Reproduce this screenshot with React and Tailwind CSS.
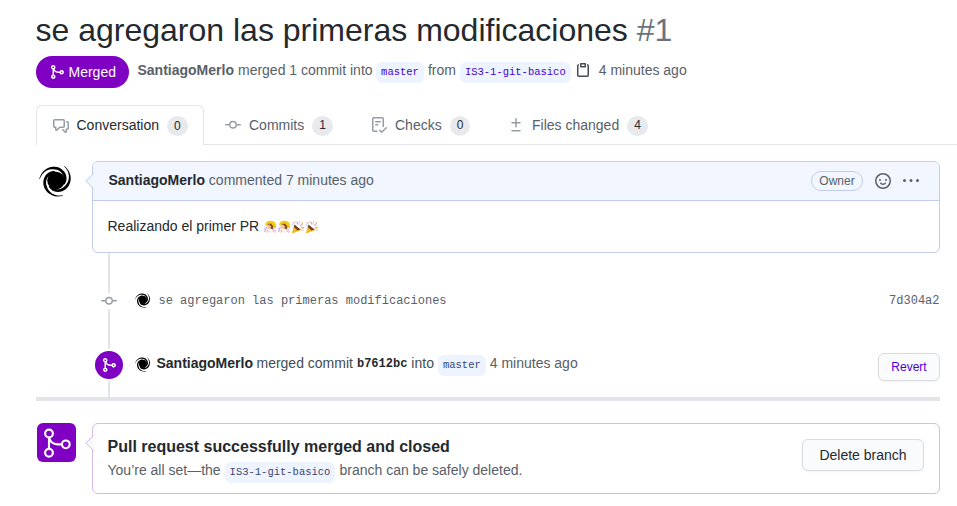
import React from "react";

const PATHS = {
  merge:
    "M5 3.254V3.25v.005a.75.75 0 110-.005v.004zm.45 1.9a2.25 2.25 0 10-1.95.218v5.256a2.25 2.25 0 101.5 0V7.123A5.735 5.735 0 009.25 9h1.378a2.251 2.251 0 100-1.5H9.25a4.25 4.25 0 01-3.8-2.346zM12.75 9a.75.75 0 100-1.5.75.75 0 000 1.5zm-8.5 4.5a.75.75 0 100-1.5.75.75 0 000 1.5z",
  discussion:
    "M1.5 2.75a.25.25 0 01.25-.25h8.5a.25.25 0 01.25.25v5.5a.25.25 0 01-.25.25h-3.5a.75.75 0 00-.53.22L3.5 11.44V9.25a.75.75 0 00-.75-.75h-1a.25.25 0 01-.25-.25v-5.5zM1.75 1A1.75 1.75 0 000 2.75v5.5C0 9.216.784 10 1.75 10H2v1.543a1.457 1.457 0 002.487 1.03L7.061 10h3.189A1.75 1.75 0 0012 8.25v-5.5A1.75 1.75 0 0010.25 1h-8.5zM14.5 4.75a.25.25 0 00-.25-.25h-.5a.75.75 0 110-1.5h.5c.966 0 1.75.784 1.75 1.75v5.5A1.75 1.75 0 0114.25 12H14v1.543a1.457 1.457 0 01-2.487 1.03L9.22 12.28a.75.75 0 111.06-1.06l2.22 2.22v-2.19a.75.75 0 01.75-.75h1a.25.25 0 00.25-.25v-5.5z",
  commit:
    "M10.5 7.75a2.5 2.5 0 11-5 0 2.5 2.5 0 015 0zm1.43.75a4.002 4.002 0 01-7.86 0H.75a.75.75 0 110-1.5h3.32a4.001 4.001 0 017.86 0h3.32a.75.75 0 110 1.5h-3.32z",
  checklist:
    "M2.5 1.75a.25.25 0 01.25-.25h8.5a.25.25 0 01.25.25v7.736a.75.75 0 101.5 0V1.75A1.75 1.75 0 0011.25 0h-8.5A1.75 1.75 0 001 1.75v11.5c0 .966.784 1.75 1.75 1.75h3.17a.75.75 0 000-1.5H2.75a.25.25 0 01-.25-.25V1.75zM4.75 4a.75.75 0 000 1.5h4.5a.75.75 0 000-1.5h-4.5zM4 7.75A.75.75 0 014.75 7h2a.75.75 0 010 1.5h-2A.75.75 0 014 7.75zm11.774 3.537a.75.75 0 00-1.048-1.074L10.7 14.145 9.281 12.72a.75.75 0 00-1.062 1.058l1.943 1.95a.75.75 0 001.055.008l4.557-4.45z",
  diff:
    "M8.75 1.75a.75.75 0 00-1.5 0V5H4a.75.75 0 000 1.5h3.25v3.25a.75.75 0 001.5 0V6.5H12A.75.75 0 0012 5H8.75V1.75zM4 13a.75.75 0 000 1.5h8a.75.75 0 100-1.5H4z",
  clipboard:
    "M5.75 1a.75.75 0 00-.75.75v3c0 .414.336.75.75.75h4.5a.75.75 0 00.75-.75v-3a.75.75 0 00-.75-.75h-4.5zm.75 3V2.5h3V4h-3zm-2.874-.467a.75.75 0 00-.752-1.298A1.75 1.75 0 002 3.75v9.5c0 .966.784 1.75 1.75 1.75h8.5A1.75 1.75 0 0014 13.25v-9.5a1.75 1.75 0 00-.874-1.515.75.75 0 10-.752 1.298.25.25 0 01.126.217v9.5a.25.25 0 01-.25.25h-8.5a.25.25 0 01-.25-.25v-9.5a.25.25 0 01.126-.217z",
  smiley:
    "M1.5 8a6.5 6.5 0 1113 0 6.5 6.5 0 01-13 0zM8 0a8 8 0 100 16A8 8 0 008 0zM5 8a1 1 0 100-2 1 1 0 000 2zm7-1a1 1 0 11-2 0 1 1 0 012 0zM5.32 9.636a.75.75 0 011.038.175l.007.009c.103.118.22.222.35.31.264.178.683.37 1.285.37.602 0 1.02-.192 1.285-.371.13-.088.247-.192.35-.31l.007-.008a.75.75 0 111.222.87l-.614-.431c.614.43.614.431.613.431v.001l-.001.002-.002.003-.005.007-.014.019a1.984 1.984 0 01-.184.213c-.16.166-.338.316-.53.445-.63.418-1.37.638-2.127.629-.946 0-1.652-.308-2.126-.63a3.331 3.331 0 01-.715-.657l-.014-.02-.005-.006-.002-.003v-.002h-.001l.613-.432-.614.43a.75.75 0 01.183-1.044h.001z",
  kebab:
    "M8 9a1.5 1.5 0 100-3 1.5 1.5 0 000 3zM1.5 9a1.5 1.5 0 100-3 1.5 1.5 0 000 3zm13 0a1.5 1.5 0 100-3 1.5 1.5 0 000 3z",
};

function Icon({ name, className = "size-4" }) {
  return (
    <svg viewBox="0 0 16 16" fill="currentColor" className={`block shrink-0 ${className}`}>
      <path fillRule="evenodd" d={PATHS[name]} />
    </svg>
  );
}

// One arm of the spiral: starts as a point far out and thickens as it winds clockwise into the core.
function armPath(startDeg) {
  const outer = [];
  const inner = [];
  for (let i = 0; i <= 20; i++) {
    const t = i / 20;
    const angle = ((startDeg + 200 * t) * Math.PI) / 180;
    const r = 16.8 - 7.4 * t;
    const width = 0.5 + 2.3 * Math.min(1, t * 2.5);
    outer.push(`${(r * Math.cos(angle)).toFixed(2)} ${(r * Math.sin(angle)).toFixed(2)}`);
    inner.unshift(`${((r - width) * Math.cos(angle)).toFixed(2)} ${((r - width) * Math.sin(angle)).toFixed(2)}`);
  }
  return `M${[...outer, ...inner].join("L")}Z`;
}

const ARMS = [185, 300, 65].map(armPath);

function Avatar({ className, viewBox = "-20 -19.5 40 40" }) {
  return (
    <svg viewBox={viewBox} className={`block shrink-0 ${className}`}>
      <circle r="8.800" />
      {ARMS.map((d) => (
        <path key={d} d={d} />
      ))}
    </svg>
  );
}

function Bride() {
  return (
    <svg viewBox="0 0 14 14" className="block size-3.5">
      <path d="M3 5C1.500 7 1 10 .5 13l2-1 1 1 1.500-4 4 0 2 4 2-1C12.500 9 12 6 10 4Z" fill="#f3eef8" />
      <path d="M2 5C2.500 1.500 5 .5 8 .8C12 1 13.800 4 13 8.500L10.500 7 8 4.500 4.500 6Z" fill="#f1cb16" />
      <path d="M5 4L8 3.500l2.500 3L10 9H8L5 6Z" fill="#86502d" />
      <path d="M4 5.500l2-1 2 2-.5 2-2 .5L4 7Z" fill="#f5c792" />
      <path d="M3.500 7L1.500 12M5 9.500L4 12.500M9 9l2.500 3.500" stroke="#eb8f86" strokeWidth=".8" />
      <path d="M2 7.500l-1 2M10.500 8l2.500 4M6.500 10.500l1 2" stroke="#bac7f2" strokeWidth=".8" />
    </svg>
  );
}

function Popper() {
  return (
    <svg viewBox="0 0 14 14" className="block size-3.5">
      <path d="M3 5.500L10.500 10 .8 13.500Z" fill="#f5b820" />
      <path d="M3.500 4.500L9.500 9.500 6.500 10.500 2.800 7Z" fill="#70402a" />
      <path d="M1.500 2l2 2M6 1.500l.5 3M12 3L9 5.500M9.500 8l3.500-.5" stroke="#f0958d" />
      <path d="M4 1l1 2M9 1L7.500 4.500M12.500 5l-3 1M1 4l1 2M10.500 10l2 .5" stroke="#c5c9f7" />
      <path d="M10.500 1.500l1 1M11 8.500l1.500.5" stroke="#f5bd65" />
    </svg>
  );
}

function Branch({ children, tone = "text-[#4400cc]" }) {
  return (
    <span className={`inline-flex h-[21px] items-center rounded-md bg-[#eef4ff] px-[5px] font-['Liberation_Mono',monospace] text-[10.5px] ${tone}`}>
      {children}
    </span>
  );
}

function Tab({ icon, label, count, className, gap = "mr-2" }) {
  return (
    <div className={`flex items-center ${className}`}>
      <Icon name={icon} className={`size-4 text-[#959da5] ${gap}`} />
      <span>{label}</span>
      <span className="ml-2 mt-px flex h-5 w-[20.7px] items-center justify-center rounded-full bg-[#e8e9ec] text-[12px] text-[#24292e]">
        {count}
      </span>
    </div>
  );
}

function Caret({ fill, stroke }) {
  return (
    <svg viewBox="0 0 8 16" className={`absolute -left-2 top-[11px] h-4 w-2 overflow-visible ${fill} ${stroke}`}>
      <path d="M8.500 .5L1 8l7.500 7.500" />
    </svg>
  );
}

export default function App() {
  return (
    <div className="h-[506px] w-[957px] overflow-hidden bg-white font-['Liberation_Sans',Arial,sans-serif] text-[14px] leading-[21px] text-[#24292e]">
      <h1 className="h-14 whitespace-nowrap pl-[35.5px] pt-3 text-[32px] leading-9">
        se agregaron las primeras modificaciones <span className="text-[#6a737d]">#1</span>
      </h1>

      <div className="flex h-[49px] items-start pl-9 text-[#586069]">
        <div className="flex h-8 w-[93px] items-center rounded-full bg-[#7f00c2] pl-[13px] text-white">
          <Icon name="merge" className="mr-[3.5px] size-4" />
          Merged
        </div>
        <div className="ml-[8.5px] mt-1 flex whitespace-nowrap">
          <b className="mr-1">SantiagoMerlo</b>
          <span className="mr-[3.5px]">merged 1 commit into</span>
          <span className="mt-0.5 flex"><Branch>master</Branch></span>
          <span className="mx-1">from</span>
          <span className="mt-0.5 flex"><Branch>IS3-1-git-basico</Branch></span>
          <Icon name="clipboard" className="ml-1 mt-0.5 size-4 text-[#444d56]" />
          <span className="ml-2">4 minutes ago</span>
        </div>
      </div>

      <nav className="flex h-10 text-[#586069]">
        <div className="w-9" />
        <Tab icon="discussion" label="Conversation" count="0" gap="mr-[7.5px]" className="w-[168px] rounded-t-md border border-b-0 border-[#e1e4e8] pl-4 text-[#24292e]" />
        <div className="flex grow border-b border-[#e1e4e8]">
          <Tab icon="commit" label="Commits" count="1" className="w-[146px] pl-[21px] pt-px" />
          <Tab icon="checklist" label="Checks" count="0" className="w-[137px] pl-[21px] pt-px" />
          <Tab icon="diff" label="Files changed" count="4" className="pl-[21px] pt-px" />
        </div>
      </nav>

      <div className="flex h-[108px] pl-9 pt-4">
        <Avatar className="size-10" />
        <section className="relative ml-4 h-[92px] w-[848px] rounded-md border border-[#c0cdef]">
          <header className="flex h-[39px] items-center rounded-t-[5px] border-b border-[#c0cdef] bg-[#f1f6ff] pl-[15.5px] text-[#586069]">
            <span className="mb-0.5">
              <b className="text-[#24292e]">SantiagoMerlo</b> commented 7 minutes ago
            </span>
            <span className="ml-auto flex h-5 w-[52px] items-center justify-center rounded-full border border-[#c0cdef] text-[12px]">Owner</span>
            <Icon name="smiley" className="ml-3 size-4" />
            <Icon name="kebab" className="ml-3 mr-5 size-4" />
          </header>
          <div className="flex items-center pl-[14.5px] pt-[15px]">
            <span className="mr-[3.5px]">Realizando el primer PR</span>
            <Bride />
            <Bride />
            <Popper />
            <Popper />
          </div>
          <Caret fill="fill-[#f1f6ff]" stroke="stroke-[#c0cdef]" />
        </section>
      </div>

      <div className="flex h-[144px] w-[940px] pl-[95px]">
        <div className="flex w-7 flex-col items-center text-[#959da5]">
          <div className="h-10 w-0.5 bg-[#e1e4e8]" />
          <Icon name="commit" />
          <div className="h-10 w-0.5 bg-[#e1e4e8]" />
          <div className="my-0.5 flex size-7 items-center justify-center rounded-full bg-[#7f00c2] text-white">
            <Icon name="merge" />
          </div>
          <div className="h-4 w-0.5 bg-[#e1e4e8]" />
        </div>
        <div className="grow pl-3">
          <div className="mt-[38px] flex items-center font-['Liberation_Mono',monospace] text-[12px] text-[#586069]">
            <Avatar className="-mt-1 mr-[7.5px] size-4" viewBox="-17 -17 34 34" />
            se agregaron las primeras modificaciones
            <span className="ml-auto mr-[0.5px]">7d304a2</span>
          </div>
          <div className="mt-[41px] flex text-[#444d56]">
            <Avatar className="mr-[5.5px] mt-[3px] size-4" viewBox="-17 -17 34 34" />
            <b className="mr-[3.5px] text-[#24292e]">SantiagoMerlo</b>
            <span className="mr-1">merged commit</span>
            <b className="mr-1 mt-px font-['Liberation_Mono',monospace] text-[12px] text-[#24292e]">b7612bc</b>
            <span className="mr-1">into</span>
            <span className="mt-0.5 flex"><Branch tone="text-[#3a4470]">master</Branch></span>
            <span className="ml-1 text-[#586069]">4 minutes ago</span>
            <button className="ml-auto h-7 w-[62px] rounded-md border border-[#d9dbde] bg-[#fafbfc] text-[12px] text-[#4c00d5] shadow-xs">Revert</button>
          </div>
        </div>
      </div>

      <div className="ml-9 h-1 w-[904px] bg-[#e1e4e8]" />

      <div className="flex pl-[37px] pt-[22px]">
        <div className="flex size-[39px] items-center justify-center rounded-md bg-[#7f00c2] text-white">
          <svg viewBox="0 0 24 24" fill="none" stroke="currentColor" strokeWidth="1.600" className="block size-8">
            <circle cx="6" cy="4.850" r="2.900" />
            <circle cx="6" cy="19.350" r="2.900" />
            <circle cx="18.600" cy="13" r="2.900" />
            <path d="M6 7.750v8.700M6 7.750c.8 3.200 3 5.250 6.250 5.250h3.450" />
          </svg>
        </div>
        <section className="relative ml-4 flex h-[71px] w-[848px] justify-between rounded-md border border-[#d8b9ec] pl-[14.5px] pr-[15px] pt-[15px]">
          <div>
            <h2 className="h-[21px] text-[16px] font-bold leading-4">Pull request successfully merged and closed</h2>
            <p className="flex text-[#586069]">
              You’re all set—the
              <span className="mx-1 mt-0.5 flex"><Branch tone="text-[#3a4470]">IS3-1-git-basico</Branch></span>
              branch can be safely deleted.
            </p>
          </div>
          <button className="h-8 w-[122px] rounded-md border border-[#d9dbde] bg-[#fafbfc] shadow-xs">Delete branch</button>
          <Caret fill="fill-[#f6f8fa]" stroke="stroke-[#d8b9ec]" />
        </section>
      </div>
    </div>
  );
}
